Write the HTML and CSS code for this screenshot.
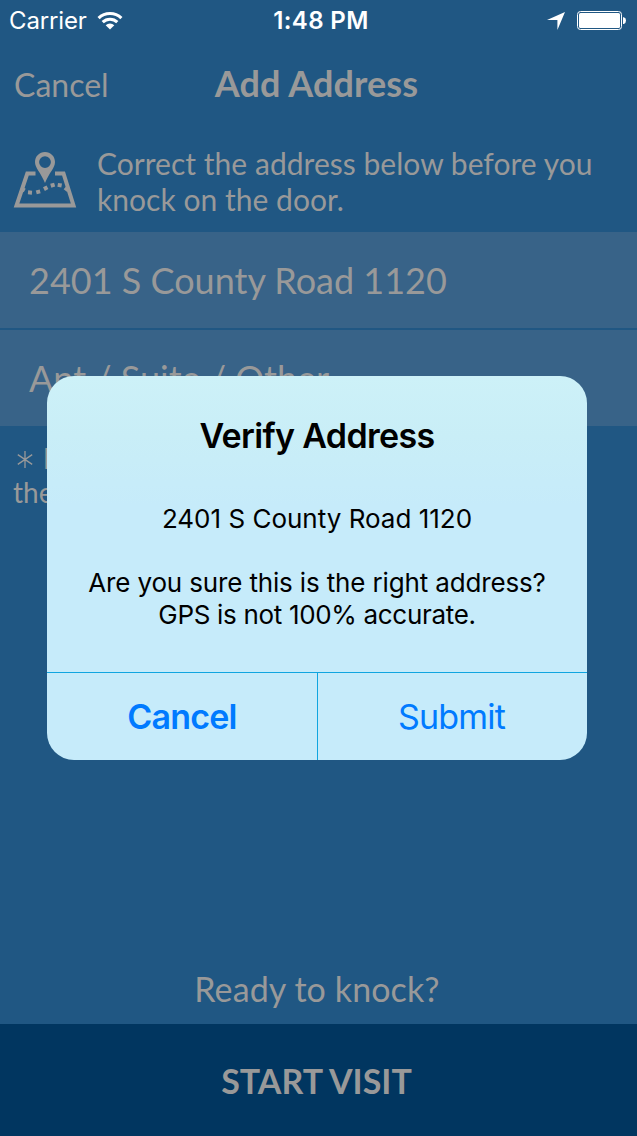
FILE: index.html
```html
<!DOCTYPE html>
<html lang="en">
<head>
<meta charset="utf-8">
<title>Add Address</title>
<link rel="stylesheet" href="styles.css">
</head>
<body>
<div class="screen">
  <div class="status">
    <div class="status-left">
      <span class="carrier">Carrier</span>
      <svg class="wifi" viewBox="0 0 26 20" width="26" height="20">
        <g fill="none" stroke="#fff" stroke-width="3.1">
          <path d="M1.6 7.1A16.3 16.3 0 0 1 24.4 7.1"/>
          <path d="M5.7 11.2A10.4 10.4 0 0 1 20.3 11.2"/>
        </g>
        <path d="M8.7 14.3A6 6 0 0 1 17.3 14.3L13 18.6Z" fill="#fff"/>
      </svg>
    </div>
    <span class="time">1:48 PM</span>
    <div class="status-right">
      <svg class="arrow" viewBox="0 0 18 18" width="18" height="18"><path d="M18 0L10.4 18V8H0Z" fill="#fff"/></svg>
      <svg class="battery" viewBox="0 0 50 20" width="50" height="20">
        <rect x=".5" y=".5" width="44" height="18" rx="3" fill="none" stroke="#fff"/>
        <rect x="2" y="2" width="41" height="15" rx="1.5" fill="#fff"/>
        <path d="M46 6.2h.8q2.2.5 2.2 3.4t-2.2 3.4H46Z" fill="#fff"/>
      </svg>
    </div>
  </div>
  <header class="nav">
    <span class="nav-cancel">Cancel</span>
    <h1 class="nav-title">Add Address</h1>
  </header>
  <section class="intro">
    <svg class="map" viewBox="0 0 64 58" width="64" height="58">
      <path d="M22.500 22.500H14.300L3.500 54.500H60.500L50.500 22.500H42" fill="none" stroke="#999" stroke-width="4"/>
      <path d="M32 1C26.3 1 22 5.4 22 11C22 17 27.500 21 32 32C36.500 21 42 17 42 11C42 5.400 37.700 1 32 1ZM32 5.200A5.900 5.900 0 1 1 32 17A5.900 5.900 0 0 1 32 5.200Z" fill="#999" fill-rule="evenodd"/>
      <g fill="#999">
        <rect x="8" y="36.500" width="4" height="4" transform="rotate(30 10 38.500)"/>
        <rect x="15" y="39.500" width="4" height="4" transform="rotate(5 17 41.500)"/>
        <rect x="23.200" y="38.900" width="4" height="4" transform="rotate(-14 25.200 40.900)"/>
        <rect x="30.700" y="35.200" width="4" height="4" transform="rotate(-28 32.700 37.200)"/>
        <rect x="37.700" y="32.200" width="4" height="4" transform="rotate(-16 39.700 34.200)"/>
        <rect x="44.700" y="32.200" width="4" height="4" transform="rotate(10 46.700 34.200)"/>
        <rect x="51.500" y="36" width="4" height="4" transform="rotate(38 53.500 38)"/>
      </g>
    </svg>
    <p class="intro-text"><span class="l1">Correct the address below before you</span><br><span class="l2">knock on the door.</span></p>
  </section>
  <div class="field"><span class="f1">2401 S County Road 1120</span></div>
  <div class="field"><span class="f2">Apt / Suite / Other</span></div>
  <p class="note"><svg class="star" viewBox="0 0 16 18" width="16" height="18"><path d="M8 0V17M.8 3.600L15.200 13.400M15.200 3.600L.8 13.400" stroke="#999" stroke-width="1.300"/></svg> <span class="note-i">I</span><br>the</p>
  <p class="ready"><span>Ready to knock?</span></p>
  <div class="start"><span>START VISIT</span></div>

  <div class="dialog">
    <div class="dialog-body">
      <h2 class="dialog-title"><span>Verify Address</span></h2>
      <p class="dialog-text"><span class="d1">2401 S County Road 1120</span><br><br><span class="d2">Are you sure this is the right address?</span><br><span class="d3">GPS is not 100% accurate.</span></p>
    </div>
    <div class="dialog-actions">
      <div class="action primary"><span>Cancel</span></div>
      <div class="action submit"><span>Submit</span></div>
    </div>
  </div>
</div>
</body>
</html>
```
FILE: styles.css
```css
* { box-sizing: border-box; margin: 0; padding: 0; }
body { width: 637px; height: 1136px; overflow: hidden; background: #205783; }
.screen {
  position: relative;
  display: flex;
  flex-direction: column;
  width: 637px;
  height: 1136px;
  background: #205783;
  color: #999;
  font-family: Lato, sans-serif;
  white-space: nowrap;
}
.status {
  display: grid;
  grid-template-columns: 1fr auto 1fr;
  align-items: center;
  height: 40px;
  padding: 2px 10px 0 9px;
  color: #fff;
  font: 24px/38px Inter, sans-serif;
}
.status-left { display: flex; align-items: center; gap: 10px; }
.carrier { letter-spacing: -.15px; }
.time { font-weight: 600; letter-spacing: .35px; padding-left: 6px; }
.status-right { display: flex; align-items: center; justify-content: flex-end; gap: 12px; }
.nav {
  display: grid;
  grid-template-columns: 1fr auto 1fr;
  align-items: center;
  height: 88px;
  padding-left: 14px;
}
.nav-cancel { font-size: 32px; }
.nav-title { font-size: 36px; font-weight: 700; margin: -3px 0 0 -18px; letter-spacing: .1px; }
.intro { display: flex; height: 104px; padding: 17px 0 0 13px; gap: 20px; }
.map { margin-top: 6px; flex: none; }
.intro-text { font-size: 30px; line-height: 36px; letter-spacing: .03px; }
.field {
  height: 96px;
  padding-left: 29px;
  background: #386388;
  font-size: 36px;
  line-height: 97px;
}
.field + .field { margin-top: 2px; }
.note { height: 90px; padding: 15px 0 0 13px; font-size: 28px; line-height: 34px; }
.star { margin-left: 4px; }
.note-i { margin-left: 2.5px; }
.ready { margin-top: auto; height: 70px; padding-right: 3px; font-size: 34px; line-height: 70px; text-align: center; letter-spacing: .1px; }
.start {
  height: 112px;
  padding-right: 4px;
  background: #013660;
  font-size: 34px;
  font-weight: 700;
  line-height: 114px;
  text-align: center;
}
.dialog {
  position: absolute;
  left: 47px;
  top: 376px;
  display: flex;
  flex-direction: column;
  width: 540px;
  height: 384px;
  border-radius: 27px;
  overflow: hidden;
  background: linear-gradient(#cdf1f8 0, #c9eef7 60px, #c6ebfa 130px, #c6ebfa 100%);
  color: #000;
  font-family: Inter, sans-serif;
  text-align: center;
}
.dialog-body { height: 296px; padding-top: 39px; }
.dialog-title { font-size: 34px; font-weight: 600; line-height: 42px; letter-spacing: -.65px; }
.dialog-text { margin-top: 46px; font-size: 26px; line-height: 32px; }
.d2 { letter-spacing: -.15px; }
.d3 { letter-spacing: -.32px; }
.dialog-actions { display: flex; height: 88px; border-top: 1px solid #10a5e0; }
.action { flex: 1; color: #007aff; font-size: 34px; line-height: 88px; letter-spacing: -.8px; }
.primary { flex: 0 0 271px; border-right: 1px solid #10a5e0; font-weight: 600; }
.submit { padding-right: 2px; }
```
